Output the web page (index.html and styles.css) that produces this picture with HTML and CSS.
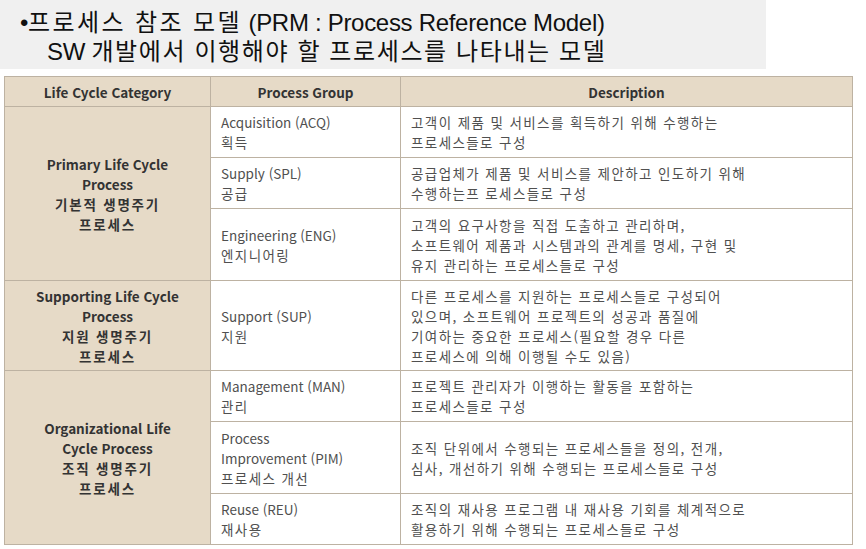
FILE: index.html
```html
<!DOCTYPE html>
<html lang="ko">
<head>
<meta charset="utf-8">
<link rel="stylesheet" href="styles.css">
</head>
<body>
<div class="banner">
  <div class="banner-line first">•<span class="tko">프로세스 참조 모델</span> (PRM : Process Reference Model)</div>
  <div class="banner-line sub">SW <span class="tko">개발에서 이행해야 할 프로세스를 나타내는 모델</span></div>
</div>
<table class="prm">
  <colgroup>
    <col class="c1"><col class="c2"><col class="c3">
  </colgroup>
  <thead>
    <tr><th>Life Cycle Category</th><th>Process Group</th><th>Description</th></tr>
  </thead>
  <tbody>
    <tr class="r2">
      <td class="cat" rowspan="3">Primary Life Cycle<br>Process<br><span class="ko">기본적 생명주기</span><br><span class="ko">프로세스</span></td>
      <td>Acquisition (ACQ)<br><span class="ko">획득</span></td>
      <td class="desc">고객이 제품 및 서비스를 획득하기 위해 수행하는<br>프로세스들로 구성</td>
    </tr>
    <tr class="r2">
      <td>Supply (SPL)<br><span class="ko">공급</span></td>
      <td class="desc">공급업체가 제품 및 서비스를 제안하고 인도하기 위해<br>수행하는프 로세스들로 구성</td>
    </tr>
    <tr class="r3">
      <td>Engineering (ENG)<br><span class="ko">엔지니어링</span></td>
      <td class="desc">고객의 요구사항을 직접 도출하고 관리하며,<br>소프트웨어 제품과 시스템과의 관계를 명세, 구현 및<br>유지 관리하는 프로세스들로 구성</td>
    </tr>
    <tr class="r4">
      <td class="cat">Supporting Life Cycle<br>Process<br><span class="ko">지원 생명주기</span><br><span class="ko">프로세스</span></td>
      <td>Support (SUP)<br><span class="ko">지원</span></td>
      <td class="desc">다른 프로세스를 지원하는 프로세스들로 구성되어<br>있으며, 소프트웨어 프로젝트의 성공과 품질에<br>기여하는 중요한 프로세스(필요할 경우 다른<br>프로세스에 의해 이행될 수도 있음)</td>
    </tr>
    <tr class="r2">
      <td class="cat" rowspan="3">Organizational Life<br>Cycle Process<br><span class="ko">조직 생명주기</span><br><span class="ko">프로세스</span></td>
      <td>Management (MAN)<br><span class="ko">관리</span></td>
      <td class="desc">프로젝트 관리자가 이행하는 활동을 포함하는<br>프로세스들로 구성</td>
    </tr>
    <tr class="r3">
      <td>Process<br>Improvement (PIM)<br><span class="ko">프로세스 개선</span></td>
      <td class="desc">조직 단위에서 수행되는 프로세스들을 정의, 전개,<br>심사, 개선하기 위해 수행되는 프로세스들로 구성</td>
    </tr>
    <tr class="r2">
      <td>Reuse (REU)<br><span class="ko">재사용</span></td>
      <td class="desc">조직의 재사용 프로그램 내 재사용 기회를 체계적으로<br>활용하기 위해 수행되는 프로세스들로 구성</td>
    </tr>
  </tbody>
</table>
</body>
</html>
```
FILE: styles.css
```css
html, body {
  margin: 0;
  padding: 0;
  background: #ffffff;
}
body {
  width: 866px;
  height: 549px;
  overflow: hidden;
}
.banner {
  width: 766px;
  height: 69px;
  background: #f0f0f0;
  box-sizing: border-box;
  padding: 8px 0 0 20px;
  font-family: "Liberation Sans", "Noto Sans CJK KR", sans-serif;
  font-size: 24px;
  line-height: 29px;
  color: #111;
}
.banner-line {
  white-space: nowrap;
  letter-spacing: -0.3px;
}
.banner-line .tko {
  letter-spacing: 1.6px;
}
.banner-line.first .tko {
  letter-spacing: 2.4px;
}
.banner-line.sub {
  padding-left: 27px;
}
.prm {
  margin: 7px 0 0 4px;
  width: 848px;
  border-collapse: collapse;
  table-layout: fixed;
  font-family: "Noto Sans CJK KR", "Noto Sans", sans-serif;
  font-size: 13.5px;
  line-height: 20px;
  color: #505050;
}
.c1 { width: 206px; }
.c2 { width: 190px; }
.c3 { width: 452px; }
.prm th, .prm td {
  border: 1px solid #bdb2a2;
  padding: 0 10px;
  vertical-align: middle;
  text-align: left;
  white-space: nowrap;
}
.prm th {
  height: 29px;
  background: #e6dac7;
  color: #333;
  font-weight: 700;
  text-align: center;
}
.prm td.cat {
  background: #e6dac7;
  color: #333;
  font-weight: 700;
  text-align: center;
}
.prm .ko {
  letter-spacing: 1.4px;
}
.prm td.cat .ko {
  letter-spacing: 1.8px;
}
.prm td.desc {
  letter-spacing: 1.4px;
}
.r2 td { height: 50px; }
.r3 td { height: 71px; }
.r4 td { height: 89px; }
```
